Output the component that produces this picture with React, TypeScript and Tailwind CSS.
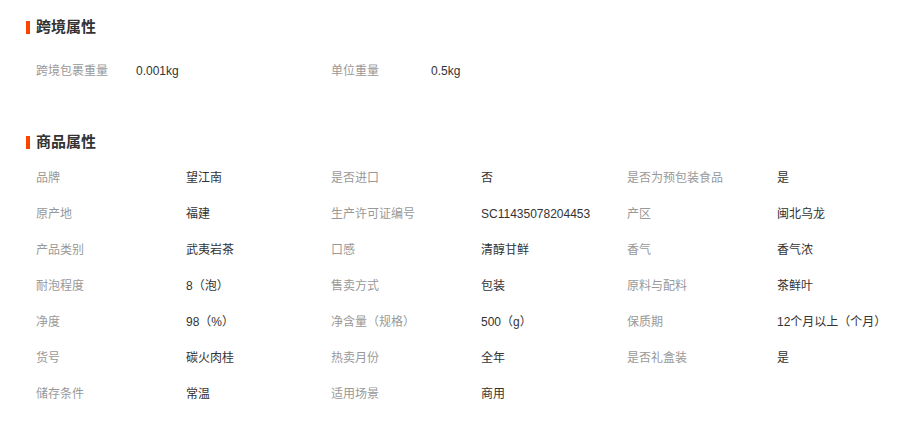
const font = { fontFamily: '"Liberation Sans", "Noto Sans CJK SC", sans-serif' };

const crossBorder = [
  ['跨境包裹重量', '0.001kg'],
  ['单位重量', '0.5kg'],
];

const attrs = [
  ['品牌', '望江南'],
  ['是否进口', '否'],
  ['是否为预包装食品', '是'],
  ['原产地', '福建'],
  ['生产许可证编号', 'SC11435078204453'],
  ['产区', '闽北乌龙'],
  ['产品类别', '武夷岩茶'],
  ['口感', '清醇甘鲜'],
  ['香气', '香气浓'],
  ['耐泡程度', '8（泡）'],
  ['售卖方式', '包装'],
  ['原料与配料', '茶鲜叶'],
  ['净度', '98（%）'],
  ['净含量（规格）', '500（g）'],
  ['保质期', '12个月以上（个月）'],
  ['货号', '碳火肉桂'],
  ['热卖月份', '全年'],
  ['是否礼盒装', '是'],
  ['储存条件', '常温'],
  ['适用场景', '商用'],
];

function SectionTitle({ title }: { title: string }) {
  return (
    <div className="flex items-center h-[16px]">
      <span className="w-[4px] h-[13px] bg-[#ff4400]" />
      <span className="ml-[6px] text-[15px] leading-[16px] font-bold text-[#333333]">{title}</span>
    </div>
  );
}

export default function App() {
  return (
    <div className="w-[899px] h-[423px] bg-white pl-[26px] pt-[19px] overflow-hidden" style={font}>
      <SectionTitle title="跨境属性" />
      <div className="mt-[18px] pl-[10px] grid grid-cols-[295px_296px] text-[12px]">
        {crossBorder.map(([k, v]) => (
          <div key={k} className="flex h-[36px] items-center">
            <span className="w-[100px] text-[#999999]">{k}</span>
            <span className="text-[#333333]">{v}</span>
          </div>
        ))}
      </div>

      <div className="mt-[45px]">
        <SectionTitle title="商品属性" />
      </div>
      <div className="mt-[10px] pl-[10px] grid grid-cols-[295px_296px_296px] text-[12px]">
        {attrs.map(([k, v]) => (
          <div key={k} className="flex h-[36px] items-center">
            <span className="w-[150px] text-[#999999]">{k}</span>
            <span className="text-[#333333]">{v}</span>
          </div>
        ))}
      </div>
    </div>
  );
}
